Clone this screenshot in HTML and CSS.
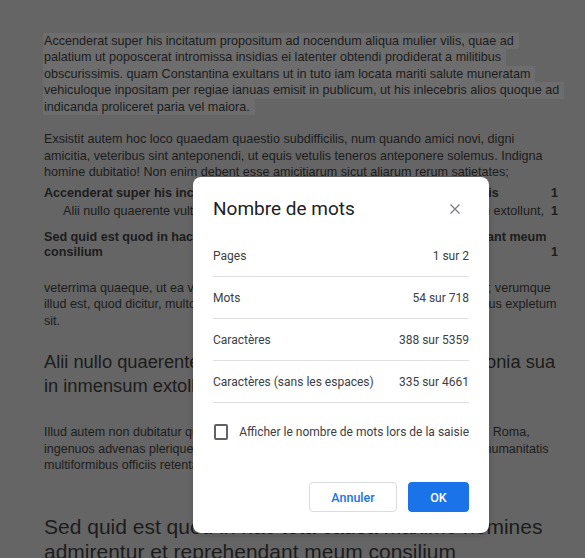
FILE: index.html
```html
<!DOCTYPE html>
<html lang="fr">

<head>
    <meta charset="UTF-8">
    <meta name="viewport" content="width=device-width, initial-scale=1.0">
    <title>Nombre de mots</title>
    <link rel="stylesheet" href="styles.css">
</head>

<body>
    <div class="doc">
        <p class="para">
            <span class="sel">Accenderat super his incitatum propositum ad nocendum aliqua mulier vilis, quae ad</span><br>
            <span class="sel">palatium ut poposcerat intromissa insidias ei latenter obtendi prodiderat a militibus</span><br>
            <span class="sel">obscurissimis. quam Constantina exultans ut in tuto iam locata mariti salute muneratam</span><br>
            <span class="sel">vehiculoque inpositam per regiae ianuas emisit in publicum, ut his inlecebris alios quoque ad</span><br>
            <span class="sel">indicanda proliceret paria vel maiora.</span>
        </p>

        <p class="para">
            Exsistit autem hoc loco quaedam quaestio subdifficilis, num quando amici novi, digni<br>
            amicitia, veteribus sint anteponendi, ut equis vetulis teneros anteponere solemus. Indigna<br>
            homine dubitatio! Non enim debent esse amicitiarum sicut aliarum rerum satietates;
        </p>

        <div class="toc">
            <div class="toc-row toc-main">
                <span>Accenderat super his incitatum propositum ad nocendum aliqua mulier vilis</span>
                <span class="toc-num">1</span>
            </div>
            <div class="toc-row toc-sub">
                <span>Alii nullo quaerente vultus severitate adsimulata patrimonia sua in inmensum extollunt,</span>
                <span class="toc-num">1</span>
            </div>
            <div class="toc-row toc-main">
                <span>Sed quid est quod in hac causa maxime homines admirentur et reprehendant meum<br>consilium</span>
                <span class="toc-num">1</span>
            </div>
        </div>

        <p class="para">
            veterrima quaeque, ut ea vina, quae vetustatem ferunt, esse debent suavissima; verumque<br>
            illud est, quod dicitur, multos modios salis simul edendos esse, ut amicitiae munus expletum<br>
            sit.
        </p>

        <h2 class="h2">Alii nullo quaerente vultus severitate adsimulata patrimonia sua<br>in inmensum extollunt,</h2>

        <p class="small">
            Illud autem non dubitatur quod cum esset aliquando virtutum omnium domicilium Roma,<br>
            ingenuos advenas plerique nobilium, ut Homerici bacarum suavitate Lotophagi, humanitatis<br>
            multiformibus officiis retentabant.
        </p>

        <h1 class="h1">Sed quid est quod in hac tota causa maxime homines<br>admirentur et reprehendant meum consilium</h1>
    </div>

    <div class="dialog">
        <div class="dialog-head">
            <span class="dialog-title">Nombre de mots</span>
            <svg class="close" width="12" height="12" viewBox="0 0 12 12">
                <path d="M1.5 1.5 L10.5 10.5 M10.5 1.5 L1.5 10.5" stroke="#7a7e83" stroke-width="1.3" fill="none"/>
            </svg>
        </div>

        <div class="stat">
            <span>Pages</span>
            <span>1 sur 2</span>
        </div>
        <div class="stat">
            <span>Mots</span>
            <span>54 sur 718</span>
        </div>
        <div class="stat">
            <span>Caractères</span>
            <span>388 sur 5359</span>
        </div>
        <div class="stat">
            <span>Caractères (sans les espaces)</span>
            <span>335 sur 4661</span>
        </div>

        <label class="check">
            <span class="box"></span>
            Afficher le nombre de mots lors de la saisie
        </label>

        <div class="actions">
            <button class="btn btn-cancel">Annuler</button>
            <button class="btn btn-ok">OK</button>
        </div>
    </div>
</body>

</html>
```

FILE: styles.css
```css
body {
    margin: 0;
    padding: 0;
    background-color: #656565;
    font-family: "Liberation Sans", Arial, sans-serif;
    color: #1c1c1c;
    overflow: hidden;
    height: 558px;
}

.doc {
    padding: 33px 0 0 44px;
    width: 514px;
    white-space: nowrap;
    font-size: 12.6px;
    line-height: 16.4px;
}

.para {
    margin: 0 0 16.4px 0;
}

.sel {
    display: inline-block;
    background-color: #6d6d6d;
    padding-right: 5px;
    margin-left: -1px;
    padding-left: 1px;
}

.toc {
    margin-top: -11px;
    margin-bottom: 19px;
}

.toc-row {
    display: flex;
    justify-content: space-between;
    align-items: flex-end;
}

.toc-main {
    font-weight: bold;
    line-height: 15.5px;
}

.toc-sub {
    padding-left: 19px;
    margin-top: 1px;
    margin-bottom: 11px;
}

.toc-num {
    font-weight: bold;
}

.h2 {
    font-size: 18.3px;
    font-weight: normal;
    line-height: 24px;
    margin: 21px 0 26px 0;
}

.small {
    font-size: 12.5px;
    line-height: 16.5px;
    margin: 0 0 40px 0;
}

.h1 {
    font-size: 21px;
    font-weight: normal;
    line-height: 25px;
    margin: 0;
}

/* word count dialog */

.dialog {
    position: absolute;
    left: 193px;
    top: 177px;
    width: 256px;
    padding: 0 20px 21px 20px;
    background-color: #fff;
    border-radius: 8px;
    box-shadow: 0 2px 6px rgba(0, 0, 0, 0.15);
    font-family: Roboto, "Liberation Sans", sans-serif;
    color: #3c4043;
}

.dialog-head {
    height: 58px;
    box-sizing: border-box;
    padding-top: 20px;
    display: flex;
    justify-content: space-between;
    align-items: flex-start;
}

.dialog-title {
    font-size: 19px;
    line-height: 24px;
    color: #202124;
}

.close {
    margin-top: 6px;
    margin-right: 8px;
}

.stat {
    height: 41px;
    display: flex;
    justify-content: space-between;
    align-items: center;
    border-bottom: 1px solid #e0e0e0;
    font-size: 12px;
}

.check {
    display: flex;
    align-items: center;
    gap: 11px;
    margin-top: 21px;
    font-size: 12px;
    line-height: 16px;
    white-space: nowrap;
}

.box {
    width: 12px;
    height: 12px;
    margin-left: 1px;
    border: 2px solid #5f6368;
    border-radius: 2px;
}

.actions {
    display: flex;
    justify-content: flex-end;
    gap: 11px;
    margin-top: 42px;
}

.btn {
    height: 30px;
    border-radius: 4px;
    font-family: Roboto, "Liberation Sans", sans-serif;
    font-size: 12.5px;
    font-weight: 500;
    cursor: pointer;
}

.btn-cancel {
    width: 88px;
    background-color: #fff;
    border: 1px solid #dadce0;
    color: #1a73e8;
}

.btn-ok {
    width: 61px;
    background-color: #1a73e8;
    border: none;
    color: #fff;
}
```
